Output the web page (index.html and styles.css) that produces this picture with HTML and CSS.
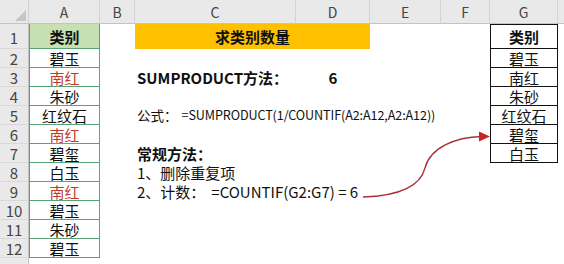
FILE: index.html
```html
<!DOCTYPE html>
<html>
<head>
<meta charset="utf-8">
<link rel="stylesheet" href="styles.css">
</head>
<body>
<div class="sheet">
  <div class="corner hc"><svg width="14" height="14" viewBox="0 0 14 14"><polygon points="13,2 13,13 2,13" fill="#c6c6c6"/></svg></div>
  <div class="colhead c2">A</div>
  <div class="colhead c3">B</div>
  <div class="colhead c4">C</div>
  <div class="colhead c5">D</div>
  <div class="colhead c6">E</div>
  <div class="colhead c7">F</div>
  <div class="colhead c8">G</div>
  <div class="colhead c9 last"></div>

  <div class="rowhead r2">1</div>
  <div class="rowhead r3">2</div>
  <div class="rowhead r4">3</div>
  <div class="rowhead r5">4</div>
  <div class="rowhead r6">5</div>
  <div class="rowhead r7">6</div>
  <div class="rowhead r8">7</div>
  <div class="rowhead r9">8</div>
  <div class="rowhead r10">9</div>
  <div class="rowhead r11">10</div>
  <div class="rowhead r12">11</div>
  <div class="rowhead r13">12</div>
  <div class="rowhead r14"></div>

  <div class="acell head r2">类别</div>
  <div class="acell r3">碧玉</div>
  <div class="acell red r4">南红</div>
  <div class="acell r5">朱砂</div>
  <div class="acell r6">红纹石</div>
  <div class="acell red r7">南红</div>
  <div class="acell r8">碧玺</div>
  <div class="acell r9">白玉</div>
  <div class="acell red r10">南红</div>
  <div class="acell r11">碧玉</div>
  <div class="acell r12">朱砂</div>
  <div class="acell r13">碧玉</div>

  <div class="title r2">求类别数量</div>
  <div class="txt big bold r4 span-c">SUMPRODUCT方法：</div>
  <div class="num bold r4">6</div>
  <div class="txt r6 span-wide">公式：<span class="formula">=SUMPRODUCT(1/COUNTIF(A2:A12,A2:A12))</span></div>
  <div class="txt big bold r8 span-wide">常规方法：</div>
  <div class="txt big r9 span-wide">1、删除重复项</div>
  <div class="txt big r10 span-wide">2、计数：<span class="gap"></span>=COUNTIF(G2:G7) = 6</div>

  <div class="gcell head r2">类别</div>
  <div class="gcell r3">碧玉</div>
  <div class="gcell r4">南红</div>
  <div class="gcell r5">朱砂</div>
  <div class="gcell r6">红纹石</div>
  <div class="gcell r7">碧玺</div>
  <div class="gcell r8">白玉</div>

  <svg class="arrow" width="564" height="264" viewBox="0 0 564 264">
    <path d="M363 197 C 395 196, 420 188, 425 168 C 430 148, 455 137, 482 136.5" fill="none" stroke="#a8323c" stroke-width="1.3"/>
    <polygon points="479,131.5 479,141.5 490,136.5" fill="#c4242c"/>
  </svg>
</div>
</body>
</html>
```
FILE: styles.css
```css
html, body {
  margin: 0;
  padding: 0;
  background: #fff;
}
body {
  width: 564px;
  height: 264px;
  overflow: hidden;
  font-family: "Noto Sans CJK SC", "Noto Sans", sans-serif;
  color: #111;
}
.sheet {
  position: relative;
  display: grid;
  grid-template-columns: 29px 71px 35px 161px 74px 71px 49px 68px 1fr;
  grid-template-rows: 24px 25px repeat(12, 19px) 19px;
  width: 564px;
  height: 264px;
  overflow: hidden;
}
.hc { grid-column: 1; grid-row: 1; }
.c2 { grid-column: 2; }
.c3 { grid-column: 3; }
.c4 { grid-column: 4; }
.c5 { grid-column: 5; }
.c6 { grid-column: 6; }
.c7 { grid-column: 7; }
.c8 { grid-column: 8; }
.c9 { grid-column: 9; }
.r2 { grid-row: 2; }
.r3 { grid-row: 3; }
.r4 { grid-row: 4; }
.r5 { grid-row: 5; }
.r6 { grid-row: 6; }
.r7 { grid-row: 7; }
.r8 { grid-row: 8; }
.r9 { grid-row: 9; }
.r10 { grid-row: 10; }
.r11 { grid-row: 11; }
.r12 { grid-row: 12; }
.r13 { grid-row: 13; }
.r14 { grid-row: 14; }

.corner {
  background: #e9e9e9;
  border-right: 1px solid #d0d0d0;
  border-bottom: 1px solid #c4c4c4;
  box-sizing: border-box;
  display: flex;
  align-items: flex-end;
  justify-content: flex-end;
  padding: 0 1px 1px 0;
}
.colhead {
  grid-row: 1;
  background: #e9e9e9;
  border-right: 1px solid #d4d4d4;
  border-bottom: 1px solid #c4c4c4;
  box-sizing: border-box;
  display: flex;
  align-items: center;
  justify-content: center;
  font-family: "Noto Sans CJK SC", sans-serif;
  font-size: 14px;
  color: #444;
  padding-top: 1px;
}
.colhead.last { border-right: none; }
.rowhead {
  grid-column: 1;
  background: #e9e9e9;
  border-right: 1px solid #c4c4c4;
  border-bottom: 1px solid #d8d8d8;
  box-sizing: border-box;
  display: flex;
  align-items: center;
  justify-content: center;
  font-family: "Noto Sans CJK SC", sans-serif;
  font-size: 15px;
  color: #444;
}
.rowhead.r2 { align-items: flex-end; padding-bottom: 0; }

.acell {
  grid-column: 2;
  border-left: 1px solid #5aa27a;
  border-right: 1px solid #5aa27a;
  border-bottom: 1px solid #5aa27a;
  box-sizing: border-box;
  display: flex;
  align-items: center;
  justify-content: center;
  font-size: 15px;
  line-height: 1;
  color: #111;
}
.acell.head {
  background: #c6e0b4;
  font-weight: bold;
  border-top: none;
}
.acell.red { color: #c0392b; }

.gcell {
  grid-column: 8;
  border-left: 1px solid #111;
  border-right: 1px solid #111;
  border-bottom: 1px solid #111;
  box-sizing: border-box;
  display: flex;
  align-items: center;
  justify-content: center;
  font-size: 15px;
  line-height: 1;
  color: #111;
}
.gcell.head {
  border-top: 1px solid #111;
  font-weight: bold;
}

.title {
  grid-column: 4 / 6;
  background: #ffc000;
  display: flex;
  align-items: center;
  justify-content: center;
  font-size: 15px;
  font-weight: bold;
  color: #111;
}
.txt {
  display: flex;
  align-items: center;
  padding-left: 2px;
  white-space: nowrap;
  font-size: 13.5px;
  line-height: 1;
  color: #111;
}
.txt.big { font-size: 15px; }
.formula {
  font-size: 12.6px;
  letter-spacing: -0.1px;
  padding-left: 4px;
}
.gap {
  display: inline-block;
  width: 6px;
}
.bold { font-weight: bold; }
.span-c { grid-column: 4; }
.span-wide { grid-column: 4 / 9; }
.num {
  grid-column: 5;
  display: flex;
  align-items: center;
  justify-content: center;
  font-size: 15px;
  line-height: 1;
}
.arrow {
  position: absolute;
  left: 0;
  top: 0;
  pointer-events: none;
}
```
